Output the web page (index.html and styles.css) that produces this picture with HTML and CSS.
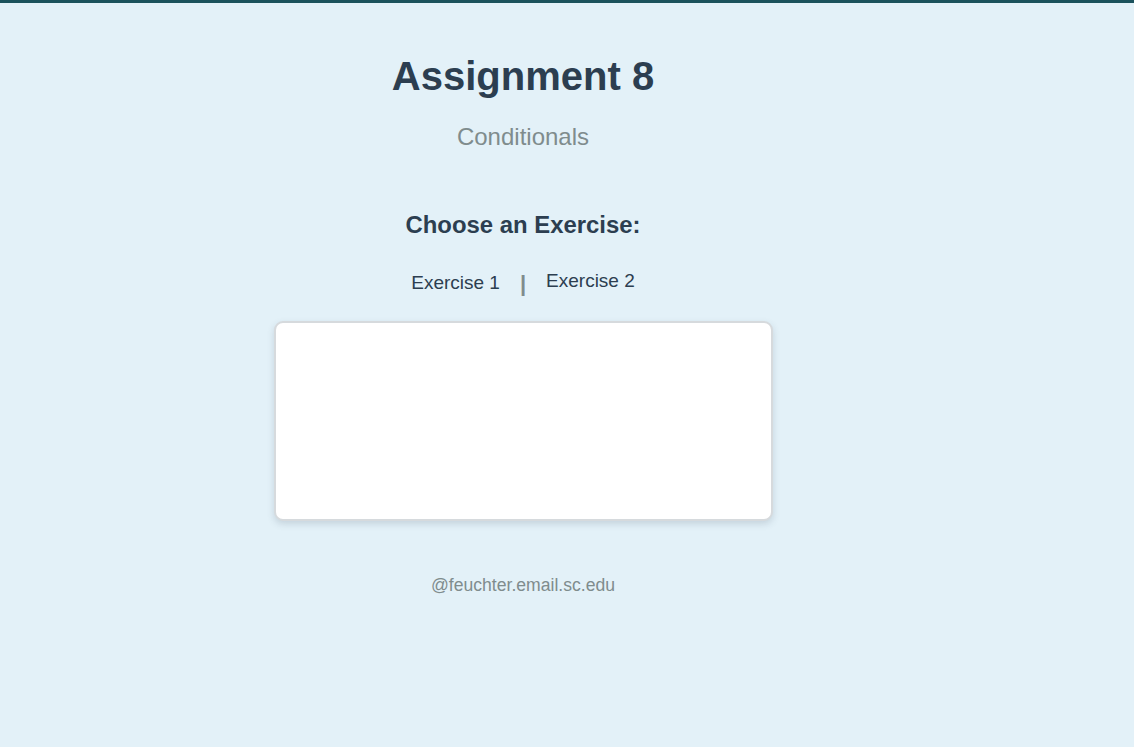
FILE: index.html
```html
<!DOCTYPE html>
<html lang="en">
<head>
<meta charset="utf-8">
<title>Assignment 8</title>
<link rel="stylesheet" href="styles.css">
</head>
<body>
<div class="page">
  <header class="head">
    <h1 class="title">Assignment 8</h1>
    <p class="subtitle">Conditionals</p>
  </header>
  <main class="main">
    <h2 class="choose">Choose an Exercise:</h2>
    <nav class="links">
      <a class="link" href="#">Exercise 1</a>
      <span class="sep">|</span>
      <a class="link link-two" href="#">Exercise 2</a>
    </nav>
    <div class="card"></div>
  </main>
  <footer class="foot">@feuchter.email.sc.edu</footer>
</div>
</body>
</html>
```
FILE: styles.css
```css
html, body {
  margin: 0;
  padding: 0;
}
body {
  background: #e3f1f8;
  border-top: 3px solid #1b525c;
  min-height: 744px;
  font-family: "Liberation Sans", Arial, Helvetica, sans-serif;
  color: #2c3e50;
}
.page {
  width: 1030px;
  margin-left: 8px;
  display: flex;
  flex-direction: column;
  align-items: center;
}
.head {
  display: flex;
  flex-direction: column;
  align-items: center;
  padding-top: 49px;
}
.title {
  margin: 0;
  font-size: 40px;
  line-height: 48px;
  font-weight: bold;
  color: #2c3e50;
}
.subtitle {
  margin: 22px 0 0;
  font-size: 24px;
  line-height: 30px;
  color: #7f8c8d;
}
.main {
  display: flex;
  flex-direction: column;
  align-items: center;
}
.choose {
  margin: 59px 0 0;
  font-size: 23.9px;
  line-height: 28px;
  font-weight: bold;
  color: #2c3e50;
}
.links {
  margin-top: 32px;
  display: flex;
  align-items: center;
  gap: 20px;
  height: 24px;
}
.link {
  font-size: 19px;
  line-height: 24px;
  color: #2c3e50;
  text-decoration: none;
}
.link-two {
  padding-bottom: 4px;
}
.sep {
  font-size: 22px;
  line-height: 24px;
  font-weight: bold;
  color: #7f8c8d;
  padding-top: 2px;
}
.card {
  margin-top: 26px;
  width: 495px;
  height: 196px;
  background: #ffffff;
  border: 2px solid #d6dadd;
  border-radius: 9px;
  box-shadow: 0 3px 7px rgba(60, 80, 100, 0.18);
}
.foot {
  margin-top: 54px;
  font-size: 17.6px;
  line-height: 20px;
  color: #7f8c8d;
}
```
